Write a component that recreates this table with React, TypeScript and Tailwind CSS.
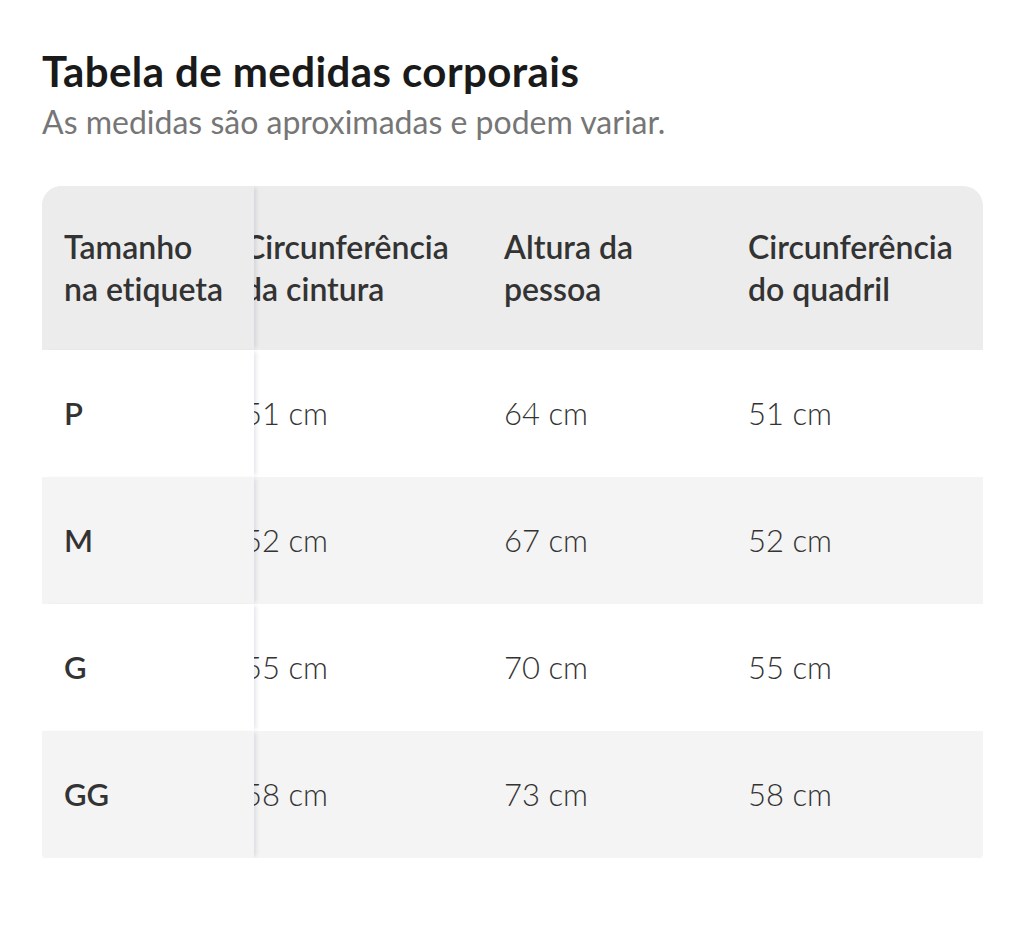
const font = { fontFamily: '"Lato", "Liberation Sans", sans-serif' };

const headers: [string, string][] = [
  ["Circunferência", "da cintura"],
  ["Altura da", "pessoa"],
  ["Circunferência", "do quadril"],
];

const rows = [
  { size: "P", values: ["51 cm", "64 cm", "51 cm"] },
  { size: "M", values: ["52 cm", "67 cm", "52 cm"] },
  { size: "G", values: ["55 cm", "70 cm", "55 cm"] },
  { size: "GG", values: ["58 cm", "73 cm", "58 cm"] },
];

const colWidths = ["w-[260px]", "w-[244px]", "w-[260px]"];

export default function App() {
  return (
    <div className="min-h-screen bg-white px-[42px] pt-[46px] [font-variant-ligatures:none]" style={font}>
      {/* Title */}
      <h1 className="text-[42px] leading-[50px] font-bold tracking-[0.01em] text-[#1a1a1a]">
        Tabela de medidas corporais
      </h1>
      <p className="mt-[5px] text-[32px] leading-[42px] text-[#767676]">
        As medidas são aproximadas e podem variar.
      </p>

      {/* Table */}
      <div className="mt-[43px] w-[941px] rounded-t-[20px] rounded-b-[4px] overflow-hidden text-[31px] text-[#333333]">
        <div className="flex h-[164px] bg-[#ececec]">
          <StickyCell>
            <div className="text-[32px] font-semibold leading-[42px]">
              Tamanho
              <br />
              na etiqueta
            </div>
          </StickyCell>
          <div className="flex-1 overflow-hidden">
            <div className="flex h-full -ml-[10px] items-center">
              {headers.map((h, i) => (
                <div key={i} className={`${colWidths[i]} shrink-0 text-[32px] font-semibold leading-[42px]`}>
                  {h[0]}
                  <br />
                  {h[1]}
                </div>
              ))}
            </div>
          </div>
        </div>

        {rows.map((row, r) => (
          <div
            key={row.size}
            className={`flex h-[127px] ${r % 2 === 1 ? "bg-[#f4f4f4]" : "bg-white"}`}
          >
            <StickyCell>
              <span className="font-semibold">{row.size}</span>
            </StickyCell>
            <div className="flex-1 overflow-hidden">
              <div className="flex h-full -ml-[10px] items-center">
                {row.values.map((v, i) => (
                  <div key={i} className={`${colWidths[i]} shrink-0 font-light`}>
                    {v}
                  </div>
                ))}
              </div>
            </div>
          </div>
        ))}
      </div>
    </div>
  );
}

function StickyCell({ children }: { children: React.ReactNode }) {
  return (
    <div className="relative z-10 flex w-[212px] shrink-0 items-center bg-inherit pl-[22px] shadow-[4px_0_4px_-2px_rgba(40,40,90,0.12)]">
      {children}
    </div>
  );
}
